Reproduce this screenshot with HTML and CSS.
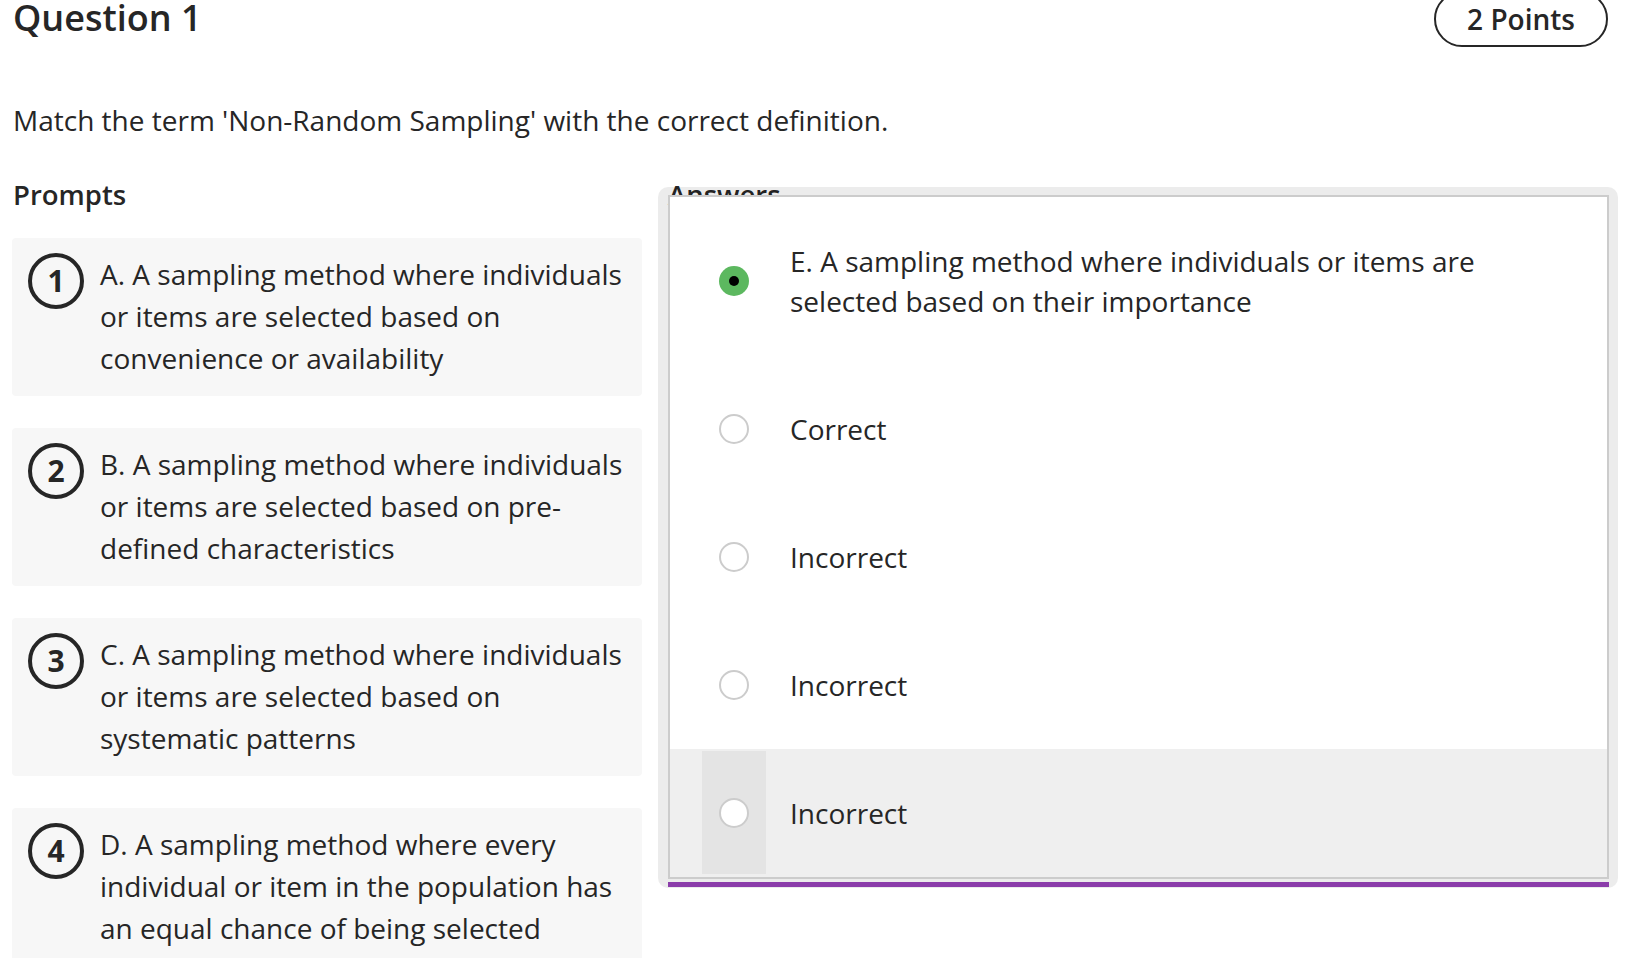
FILE: index.html
```html
<!DOCTYPE html>
<html lang="en">
<head>
<meta charset="utf-8">
<title>Question 1</title>
<link rel="stylesheet" href="styles.css">
</head>
<body>
<div class="page">
  <header class="q-header">
    <h1 class="q-title">Question 1</h1>
    <div class="points">2 Points</div>
  </header>
  <p class="q-text">Match the term 'Non-Random Sampling' with the correct definition.</p>
  <div class="match">
    <section class="prompts">
      <h2 class="col-label">Prompts</h2>
      <div class="card">
        <span class="num">1</span>
        <p class="card-text">A. A sampling method where individuals or items are selected based on convenience or availability</p>
      </div>
      <div class="card">
        <span class="num">2</span>
        <p class="card-text">B. A sampling method where individuals or items are selected based on pre-defined characteristics</p>
      </div>
      <div class="card">
        <span class="num">3</span>
        <p class="card-text">C. A sampling method where individuals or items are selected based on systematic patterns</p>
      </div>
      <div class="card">
        <span class="num">4</span>
        <p class="card-text">D. A sampling method where every individual or item in the population has an equal chance of being selected</p>
      </div>
    </section>
    <section class="answers">
      <h2 class="col-label">Answers</h2>
      <div class="dropdown">
        <div class="listbox">
          <div class="option">
            <span class="radio-cell"><span class="radio checked"></span></span>
            <span class="opt-text">E. A sampling method where individuals or items are selected based on their importance</span>
          </div>
          <div class="option">
            <span class="radio-cell"><span class="radio"></span></span>
            <span class="opt-text">Correct</span>
          </div>
          <div class="option">
            <span class="radio-cell"><span class="radio"></span></span>
            <span class="opt-text">Incorrect</span>
          </div>
          <div class="option">
            <span class="radio-cell"><span class="radio"></span></span>
            <span class="opt-text">Incorrect</span>
          </div>
          <div class="option hover">
            <span class="radio-cell"><span class="radio"></span></span>
            <span class="opt-text">Incorrect</span>
          </div>
        </div>
        <div class="focus-bar"></div>
      </div>
    </section>
  </div>
</div>
</body>
</html>
```
FILE: styles.css
```css
* { box-sizing: border-box; }
html, body {
  margin: 0;
  padding: 0;
  background: #ffffff;
  overflow: hidden;
}
body {
  font-family: "Open Sans", "Noto Sans", "DejaVu Sans", sans-serif;
  color: #262626;
}
.page {
  padding: 0 30px 0 12px;
}
.q-header {
  display: flex;
  justify-content: space-between;
  align-items: flex-start;
  margin-top: -9px;
  height: 56px;
}
.q-title {
  margin: 5px 0 0 1px;
  font-size: 36px;
  line-height: 43px;
  font-weight: 600;
  color: #262626;
}
.points {
  height: 56px;
  border: 2px solid #262626;
  border-radius: 28px;
  padding: 1px 31px 0 31px;
  font-size: 28px;
  font-weight: 600;
  line-height: 50px;
  color: #262626;
}
.q-text {
  margin: 52px 0 0 1px;
  font-size: 28px;
  line-height: 42px;
}
.match {
  display: grid;
  grid-template-columns: 630px 1fr;
  column-gap: 26px;
  margin-top: 36px;
}
.col-label {
  margin: 0 0 25px 0;
  font-size: 27.5px;
  line-height: 36px;
  font-weight: 600;
}
.prompts .col-label { margin-left: 1px; }
.card {
  display: flex;
  align-items: flex-start;
  background: #f7f7f7;
  border-radius: 4px;
  padding: 15px 16px 17px 16px;
  margin-bottom: 32px;
}
.num {
  flex: 0 0 56px;
  width: 56px;
  height: 56px;
  border: 4px solid #262626;
  border-radius: 50%;
  display: flex;
  align-items: center;
  justify-content: center;
  font-size: 30px;
  font-weight: 700;
  line-height: 1;
  margin-right: 16px;
}
.card-text {
  margin: 0;
  font-size: 28px;
  line-height: 42px;
  color: #262626;
}
.answers {
  position: relative;
}
.dropdown {
  position: absolute;
  top: 10px;
  left: -10px;
  right: -10px;
  background: rgba(0, 0, 0, 0.075);
  border-radius: 10px;
  padding: 8px 9px 1px 10px;
}
.listbox {
  background: #ffffff;
  border: 2px solid #cccccc;
}
.option {
  display: flex;
  align-items: stretch;
}
.radio-cell {
  flex: 0 0 64px;
  margin: 2px 0 3px 32px;
  display: flex;
  align-items: center;
  justify-content: center;
}
.option.hover {
  background: #efefef;
}
.option.hover .radio-cell {
  background: #e4e4e4;
}
.radio {
  width: 30px;
  height: 30px;
  border-radius: 50%;
  border: 2px solid #cccccc;
  background: #ffffff;
  display: flex;
  align-items: center;
  justify-content: center;
}
.radio.checked {
  border: none;
  background: #5cb85f;
}
.radio.checked::after {
  content: "";
  width: 10px;
  height: 10px;
  border-radius: 50%;
  background: #000000;
}
.opt-text {
  flex: 1;
  padding: 44px 34px 44px 24px;
  font-size: 28px;
  line-height: 40px;
  color: #262626;
}
.focus-bar {
  height: 5px;
  margin-top: 3px;
  background: #8b3daa;
}
```
